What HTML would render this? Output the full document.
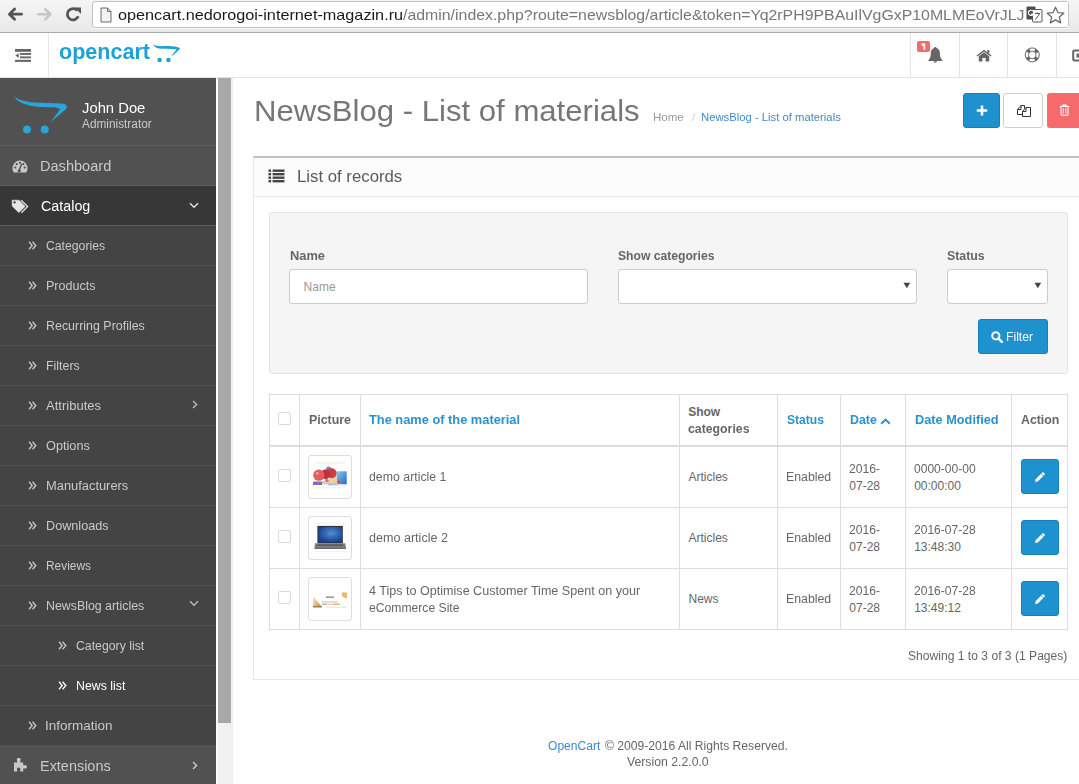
<!DOCTYPE html>
<html><head><meta charset="utf-8"><style>
html,body{margin:0;padding:0;width:1079px;height:784px;overflow:hidden;background:#fff;position:relative;font-family:"Liberation Sans",sans-serif;}
.t{position:absolute;white-space:pre;line-height:20px;height:20px;}
svg{display:block;}
</style></head><body>
<div style="position:absolute;left:0px;top:0px;width:1079px;height:32px;background:linear-gradient(#f5f5f5,#e9e9e9);"></div>
<div style="position:absolute;left:0px;top:32px;width:1079px;height:1px;background:#a9a9a9;"></div>
<svg style="position:absolute;left:0px;top:0px;" width="30" height="30" viewBox="0 0 30 30"><path d="M21.6 14.2H10 M14.6 9.1L9.4 14.2L14.6 19.3" fill="none" stroke="#555" stroke-width="2.8" stroke-linecap="round" stroke-linejoin="round"/></svg>
<svg style="position:absolute;left:30px;top:0px;" width="30" height="30" viewBox="0 0 30 30"><path d="M8.4 14.2H20 M15.3 9.1L20.5 14.2L15.3 19.3" fill="none" stroke="#c6c6c6" stroke-width="2.5" stroke-linecap="round" stroke-linejoin="round"/></svg>
<svg style="position:absolute;left:65px;top:6px;" width="17" height="17" viewBox="0 0 17 17"><path d="M13.2 10.3A5.6 5.6 0 1 1 12.2 4.6" fill="none" stroke="#555" stroke-width="2.8"/><path d="M9.5 1.5L16 1.5L16 8Z" fill="#555"/></svg>
<div style="position:absolute;left:92px;top:1px;width:977px;height:27px;background:#fff;border:1px solid #c3c3c3;border-radius:3px;box-sizing:border-box;box-shadow:0 1px 0 #fafafa;"></div>
<svg style="position:absolute;left:100px;top:6.5px;" width="12" height="16" viewBox="0 0 12 16"><path d="M1 1H7.5L11 4.5V15H1Z" fill="#f2f2f2" stroke="#6a6a6a" stroke-width="1"/><path d="M7.5 1V4.5H11" fill="none" stroke="#6a6a6a" stroke-width="1"/></svg>
<div class="t" style="left:117.80px;top:5.10px;font-size:15px;color:#1a1a1a;font-family:'Liberation Sans';transform:scale(1.0819,1.0);transform-origin:0 15.20px;">opencart.nedorogoi-internet-magazin.ru</div>
<div class="t" style="left:403.30px;top:5.10px;font-size:15px;color:#777;font-family:'Liberation Sans';transform:scale(1.0578,1.0);transform-origin:0 15.20px;">/admin/index.php?route=newsblog/article&amp;token=Yq2rPH9PBAuIlVgGxP10MLMEoVrJLJ</div>
<div style="position:absolute;left:1025px;top:2px;width:43px;height:25px;background:#fff;"></div>
<svg style="position:absolute;left:1026px;top:6px;" width="17" height="17" viewBox="0 0 17 17"><rect x="0.5" y="0.5" width="9" height="13" rx="1" fill="#4d4d4d"/><rect x="6.5" y="3.5" width="9.5" height="12.5" rx="1" fill="#fff" stroke="#555"/><path d="M7 5.2A2.6 2.6 0 1 0 7.2 8.2H5.2" fill="none" stroke="#fff" stroke-width="1.2"/><path d="M9 7.5H14M11.5 6.5V8M9.5 13.5L13.5 8" fill="none" stroke="#555" stroke-width="1"/></svg>
<svg style="position:absolute;left:1046px;top:6px;" width="19" height="18" viewBox="0 0 19 18"><path d="M9.5 1.2L11.9 6.6L17.8 7.2L13.4 11.1L14.7 16.9L9.5 13.9L4.3 16.9L5.6 11.1L1.2 7.2L7.1 6.6Z" fill="none" stroke="#6b6b6b" stroke-width="1.3" stroke-linejoin="round"/></svg>
<div style="position:absolute;left:0px;top:77px;width:1079px;height:1px;background:#e2e2e2;"></div>
<div style="position:absolute;left:48px;top:33px;width:1px;height:44px;background:#e6e6e6;"></div>
<svg style="position:absolute;left:15px;top:49px;" width="17" height="13" viewBox="0 0 17 13"><rect x="0" y="0" width="16" height="2.8" fill="#666"/><rect x="5" y="4" width="11" height="1.9" fill="#666"/><rect x="5" y="7.4" width="11" height="1.9" fill="#666"/><rect x="0" y="10.8" width="16" height="2.1" fill="#666"/><path d="M0.4 6.6L3.6 4.2V9Z" fill="#666"/></svg>
<div style="position:absolute;left:910px;top:33px;width:1px;height:44px;background:#e3e3e3;"></div>
<div style="position:absolute;left:959px;top:33px;width:1px;height:44px;background:#e3e3e3;"></div>
<div style="position:absolute;left:1007px;top:33px;width:1px;height:44px;background:#e3e3e3;"></div>
<div style="position:absolute;left:1056px;top:33px;width:1px;height:44px;background:#e3e3e3;"></div>
<div style="position:absolute;left:917px;top:41px;width:13px;height:11px;background:#f56b6b;border-radius:2px;"></div>
<svg style="position:absolute;left:927px;top:46px;" width="17" height="18" viewBox="0 0 17 18"><path d="M8.3 2C5 2 3.8 4.6 3.8 7.6C3.8 11 2.8 12.8 1 14.9H15.7C13.9 12.8 12.9 11 12.9 7.6C12.9 4.6 11.7 2 8.4 2Z" fill="#666"/><rect x="7.4" y="0.9" width="1.9" height="1.8" fill="#666"/><path d="M6.5 15.2A1.9 1.9 0 0 0 10.2 15.2Z" fill="#666"/></svg>
<svg style="position:absolute;left:976px;top:49px;" width="16" height="13" viewBox="0 0 16 13"><path d="M0.5 6.6L8 0.8L15.5 6.6L14.6 7.6L8 2.6L1.4 7.6Z" fill="#666"/><path d="M2.8 7.2L8 3.3L13.2 7.2V12.5H9.6V9H6.4V12.5H2.8Z" fill="#666"/><rect x="11.3" y="1" width="2" height="3.6" fill="#666"/></svg>
<svg style="position:absolute;left:1024px;top:46px;" width="17" height="18" viewBox="0 0 17 18"><circle cx="8.25" cy="8.9" r="7.0" fill="none" stroke="#666" stroke-width="1"/><circle cx="8.25" cy="8.9" r="3.8" fill="none" stroke="#666" stroke-width="0.9"/><circle cx="8.25" cy="8.9" r="5.4" fill="none" stroke="#666" stroke-width="3.1" stroke-dasharray="3.3 5.03" stroke-dashoffset="-2.51"/></svg>
<svg style="position:absolute;left:1072px;top:49px;" width="10" height="13" viewBox="0 0 10 13"><path d="M7 1.5H2.5Q1.2 1.5 1.2 2.8V10.2Q1.2 11.5 2.5 11.5H7" fill="none" stroke="#666" stroke-width="2"/><rect x="4.5" y="4.5" width="6" height="4" fill="#666"/></svg>
<div class="t" style="left:58.50px;top:41.92px;font-size:21px;font-weight:bold;color:#1ea1da;font-family:'Liberation Sans';transform:scale(1.0260,1.07);transform-origin:0 17.28px;">opencart</div>
<svg style="position:absolute;left:148px;top:38px;" width="40" height="28" viewBox="0 0 40 28"><path d="M5 6C7 8 10 8.4 18.5 8C24 7.8 29 8.5 32 10L31.8 11C29.5 13.5 27 15.8 24.5 17.8L23.8 17.4C25.5 15.3 27.2 13.3 28.6 11.2C22 11 16 11.2 11 10.6C8 10.2 6 8.5 5 6Z" fill="#1ea1da"/><circle cx="11.6" cy="22" r="2.2" fill="#1ea1da"/><circle cx="20.4" cy="22" r="2.2" fill="#1ea1da"/></svg>
<div style="position:absolute;left:0px;top:78px;width:216px;height:706px;background:#515151;"></div>
<div style="position:absolute;left:0px;top:145px;width:216px;height:1px;background:#5c5c5c;"></div>
<div style="position:absolute;left:0px;top:185px;width:216px;height:1px;background:#5c5c5c;"></div>
<div style="position:absolute;left:0px;top:186px;width:216px;height:39px;background:#373737;"></div>
<div style="position:absolute;left:0px;top:225px;width:216px;height:1px;background:#5a5a5a;"></div>
<div style="position:absolute;left:0px;top:226px;width:216px;height:39px;background:#444;"></div>
<div style="position:absolute;left:0px;top:265px;width:216px;height:1px;background:#505050;"></div>
<div style="position:absolute;left:0px;top:266px;width:216px;height:39px;background:#444;"></div>
<div style="position:absolute;left:0px;top:305px;width:216px;height:1px;background:#505050;"></div>
<div style="position:absolute;left:0px;top:306px;width:216px;height:39px;background:#444;"></div>
<div style="position:absolute;left:0px;top:345px;width:216px;height:1px;background:#505050;"></div>
<div style="position:absolute;left:0px;top:346px;width:216px;height:39px;background:#444;"></div>
<div style="position:absolute;left:0px;top:385px;width:216px;height:1px;background:#505050;"></div>
<div style="position:absolute;left:0px;top:386px;width:216px;height:39px;background:#444;"></div>
<div style="position:absolute;left:0px;top:425px;width:216px;height:1px;background:#505050;"></div>
<div style="position:absolute;left:0px;top:426px;width:216px;height:39px;background:#444;"></div>
<div style="position:absolute;left:0px;top:465px;width:216px;height:1px;background:#505050;"></div>
<div style="position:absolute;left:0px;top:466px;width:216px;height:39px;background:#444;"></div>
<div style="position:absolute;left:0px;top:505px;width:216px;height:1px;background:#505050;"></div>
<div style="position:absolute;left:0px;top:506px;width:216px;height:39px;background:#444;"></div>
<div style="position:absolute;left:0px;top:545px;width:216px;height:1px;background:#505050;"></div>
<div style="position:absolute;left:0px;top:546px;width:216px;height:39px;background:#444;"></div>
<div style="position:absolute;left:0px;top:585px;width:216px;height:1px;background:#505050;"></div>
<div style="position:absolute;left:0px;top:586px;width:216px;height:39px;background:#444;"></div>
<div style="position:absolute;left:0px;top:625px;width:216px;height:1px;background:#505050;"></div>
<div style="position:absolute;left:0px;top:626px;width:216px;height:39px;background:#444;"></div>
<div style="position:absolute;left:0px;top:665px;width:216px;height:1px;background:#505050;"></div>
<div style="position:absolute;left:0px;top:666px;width:216px;height:39px;background:#444;"></div>
<div style="position:absolute;left:0px;top:705px;width:216px;height:1px;background:#505050;"></div>
<div style="position:absolute;left:0px;top:706px;width:216px;height:39px;background:#444;"></div>
<div style="position:absolute;left:0px;top:745px;width:216px;height:1px;background:#515151;"></div>
<div style="position:absolute;left:216px;top:78px;width:17px;height:706px;background:#f1f1f1;"></div>
<div style="position:absolute;left:216px;top:78px;width:2px;height:706px;background:#fcfcfc;"></div>
<div style="position:absolute;left:218px;top:78px;width:13px;height:645px;background:#a8a8a8;"></div>
<svg style="position:absolute;left:8px;top:88px;" width="64" height="52" viewBox="8 88 64 52"><path d="M12.97 94.96C15.5 97.8 18.5 99.4 21.3 100C26 101.6 30 102.4 34.5 102.6L47.8 103.1L61 103.6C64 103.9 66 104.6 66.6 105.6L67 106.9C66.5 108 65.8 109.2 65 109.9L50.4 122.2L59.7 109.9C60 109.2 59.5 108.7 59 108.6C57.5 107.8 56 107.3 54.4 107.2L41.2 106.9C35 106.5 31 105.8 27.9 104.9C23 103.8 19 102 16.5 99.4Z" fill="#28a6da"/><circle cx="27" cy="129.6" r="4" fill="#28a6da"/><circle cx="44.7" cy="129.6" r="4" fill="#28a6da"/></svg>
<div class="t" style="left:82.30px;top:97.80px;font-size:15px;color:#fff;font-family:'Liberation Sans';transform:scale(0.9864,1.0);transform-origin:0 15.20px;">John Doe</div>
<div class="t" style="left:82.30px;top:113.84px;font-size:12px;color:#c9c9c9;font-family:'Liberation Sans';transform:scale(0.9860,1.0);transform-origin:0 14.16px;">Administrator</div>
<svg style="position:absolute;left:12px;top:160px;" width="16" height="13" viewBox="0 0 16 13"><path d="M8 0.5A7.5 7.5 0 0 0 0.5 8C0.5 9.7 1 11.2 1.8 12.4H14.2C15 11.2 15.5 9.7 15.5 8A7.5 7.5 0 0 0 8 0.5Z" fill="#c8c8c8"/><circle cx="3.3" cy="7.6" r="1.1" fill="#515151"/><circle cx="4.7" cy="4.2" r="1.1" fill="#515151"/><circle cx="8" cy="2.8" r="1.1" fill="#515151"/><circle cx="12.7" cy="7.6" r="1.1" fill="#515151"/><circle cx="11.3" cy="4.2" r="1.1" fill="#515151"/><path d="M9.6 4L7 10.8" stroke="#515151" stroke-width="1.4"/><circle cx="7.2" cy="10.8" r="1.6" fill="#515151"/></svg>
<div class="t" style="left:40.26px;top:156.15px;font-size:14px;color:#c9c9c9;font-family:'Liberation Sans';transform:scale(1.0404,1.0);transform-origin:0 14.85px;">Dashboard</div>
<svg style="position:absolute;left:8px;top:195px;" width="24" height="22" viewBox="0 0 24 22"><path d="M4.2 5.2H11L17.1 11.4L10.8 17.6L4.2 11Z" fill="#e6e6e6" stroke="#e6e6e6" stroke-width="0.6" stroke-linejoin="round"/><circle cx="6.6" cy="7.4" r="1.1" fill="#373737"/><path d="M13.2 5.2L19.6 11.5L13.4 17.8" fill="none" stroke="#e6e6e6" stroke-width="1.3"/></svg>
<div class="t" style="left:41.30px;top:196.15px;font-size:14px;color:#fff;font-family:'Liberation Sans';transform:scale(1.0217,1.0);transform-origin:0 14.85px;">Catalog</div>
<svg style="position:absolute;left:188.5px;top:202px;" width="10" height="7" viewBox="0 0 10 7"><path d="M1 1.2L5 5.2L9 1.2" fill="none" stroke="#e0e0e0" stroke-width="1.4"/></svg>
<svg style="position:absolute;left:27.5px;top:241.3px;" width="9" height="9" viewBox="0 0 9 9"><path d="M1 0.8L4.2 4.5L1 8.2M4.6 0.8L7.8 4.5L4.6 8.2" fill="none" stroke="#c9c9c9" stroke-width="1.3"/></svg>
<div class="t" style="left:46.30px;top:235.84px;font-size:12px;color:#c9c9c9;font-family:'Liberation Sans';transform:scale(1.0184,1.0);transform-origin:0 14.16px;">Categories</div>
<svg style="position:absolute;left:27.5px;top:281.3px;" width="9" height="9" viewBox="0 0 9 9"><path d="M1 0.8L4.2 4.5L1 8.2M4.6 0.8L7.8 4.5L4.6 8.2" fill="none" stroke="#c9c9c9" stroke-width="1.3"/></svg>
<div class="t" style="left:46.30px;top:275.84px;font-size:12px;color:#c9c9c9;font-family:'Liberation Sans';transform:scale(1.0432,1.0);transform-origin:0 14.16px;">Products</div>
<svg style="position:absolute;left:27.5px;top:321.3px;" width="9" height="9" viewBox="0 0 9 9"><path d="M1 0.8L4.2 4.5L1 8.2M4.6 0.8L7.8 4.5L4.6 8.2" fill="none" stroke="#c9c9c9" stroke-width="1.3"/></svg>
<div class="t" style="left:46.30px;top:315.84px;font-size:12px;color:#c9c9c9;font-family:'Liberation Sans';transform:scale(1.0360,1.0);transform-origin:0 14.16px;">Recurring Profiles</div>
<svg style="position:absolute;left:27.5px;top:361.3px;" width="9" height="9" viewBox="0 0 9 9"><path d="M1 0.8L4.2 4.5L1 8.2M4.6 0.8L7.8 4.5L4.6 8.2" fill="none" stroke="#c9c9c9" stroke-width="1.3"/></svg>
<div class="t" style="left:46.30px;top:355.84px;font-size:12px;color:#c9c9c9;font-family:'Liberation Sans';transform:scale(1.0317,1.0);transform-origin:0 14.16px;">Filters</div>
<svg style="position:absolute;left:27.5px;top:401.3px;" width="9" height="9" viewBox="0 0 9 9"><path d="M1 0.8L4.2 4.5L1 8.2M4.6 0.8L7.8 4.5L4.6 8.2" fill="none" stroke="#c9c9c9" stroke-width="1.3"/></svg>
<div class="t" style="left:46.30px;top:395.84px;font-size:12px;color:#c9c9c9;font-family:'Liberation Sans';transform:scale(1.0850,1.0);transform-origin:0 14.16px;">Attributes</div>
<svg style="position:absolute;left:27.5px;top:441.3px;" width="9" height="9" viewBox="0 0 9 9"><path d="M1 0.8L4.2 4.5L1 8.2M4.6 0.8L7.8 4.5L4.6 8.2" fill="none" stroke="#c9c9c9" stroke-width="1.3"/></svg>
<div class="t" style="left:46.30px;top:435.84px;font-size:12px;color:#c9c9c9;font-family:'Liberation Sans';transform:scale(1.0591,1.0);transform-origin:0 14.16px;">Options</div>
<svg style="position:absolute;left:27.5px;top:481.3px;" width="9" height="9" viewBox="0 0 9 9"><path d="M1 0.8L4.2 4.5L1 8.2M4.6 0.8L7.8 4.5L4.6 8.2" fill="none" stroke="#c9c9c9" stroke-width="1.3"/></svg>
<div class="t" style="left:46.30px;top:475.84px;font-size:12px;color:#c9c9c9;font-family:'Liberation Sans';transform:scale(1.0730,1.0);transform-origin:0 14.16px;">Manufacturers</div>
<svg style="position:absolute;left:27.5px;top:521.3px;" width="9" height="9" viewBox="0 0 9 9"><path d="M1 0.8L4.2 4.5L1 8.2M4.6 0.8L7.8 4.5L4.6 8.2" fill="none" stroke="#c9c9c9" stroke-width="1.3"/></svg>
<div class="t" style="left:46.30px;top:515.84px;font-size:12px;color:#c9c9c9;font-family:'Liberation Sans';transform:scale(1.0545,1.0);transform-origin:0 14.16px;">Downloads</div>
<svg style="position:absolute;left:27.5px;top:561.3px;" width="9" height="9" viewBox="0 0 9 9"><path d="M1 0.8L4.2 4.5L1 8.2M4.6 0.8L7.8 4.5L4.6 8.2" fill="none" stroke="#c9c9c9" stroke-width="1.3"/></svg>
<div class="t" style="left:46.30px;top:555.84px;font-size:12px;color:#c9c9c9;font-family:'Liberation Sans';transform:scale(0.9902,1.0);transform-origin:0 14.16px;">Reviews</div>
<svg style="position:absolute;left:27.5px;top:601.3px;" width="9" height="9" viewBox="0 0 9 9"><path d="M1 0.8L4.2 4.5L1 8.2M4.6 0.8L7.8 4.5L4.6 8.2" fill="none" stroke="#c9c9c9" stroke-width="1.3"/></svg>
<div class="t" style="left:46.30px;top:595.84px;font-size:12px;color:#c9c9c9;font-family:'Liberation Sans';transform:scale(1.0297,1.0);transform-origin:0 14.16px;">NewsBlog articles</div>
<svg style="position:absolute;left:57.5px;top:641.3px;" width="9" height="9" viewBox="0 0 9 9"><path d="M1 0.8L4.2 4.5L1 8.2M4.6 0.8L7.8 4.5L4.6 8.2" fill="none" stroke="#c9c9c9" stroke-width="1.3"/></svg>
<div class="t" style="left:76.30px;top:635.84px;font-size:12px;color:#c9c9c9;font-family:'Liberation Sans';transform:scale(1.0229,1.0);transform-origin:0 14.16px;">Category list</div>
<svg style="position:absolute;left:57.5px;top:681.3px;" width="9" height="9" viewBox="0 0 9 9"><path d="M1 0.8L4.2 4.5L1 8.2M4.6 0.8L7.8 4.5L4.6 8.2" fill="none" stroke="#fff" stroke-width="1.3"/></svg>
<div class="t" style="left:76.30px;top:675.84px;font-size:12px;color:#fff;font-family:'Liberation Sans';transform:scale(1.0273,1.0);transform-origin:0 14.16px;">News list</div>
<svg style="position:absolute;left:27.5px;top:721.3px;" width="9" height="9" viewBox="0 0 9 9"><path d="M1 0.8L4.2 4.5L1 8.2M4.6 0.8L7.8 4.5L4.6 8.2" fill="none" stroke="#c9c9c9" stroke-width="1.3"/></svg>
<div class="t" style="left:45.18px;top:715.84px;font-size:12px;color:#c9c9c9;font-family:'Liberation Sans';transform:scale(1.1241,1.0);transform-origin:0 14.16px;">Information</div>
<svg style="position:absolute;left:192px;top:400px;" width="6" height="9" viewBox="0 0 6 9"><path d="M1 1L4.6 4.5L1 8" fill="none" stroke="#bbb" stroke-width="1.4"/></svg>
<svg style="position:absolute;left:189px;top:600px;" width="10" height="7" viewBox="0 0 10 7"><path d="M1 1.2L5 5.2L9 1.2" fill="none" stroke="#bbb" stroke-width="1.4"/></svg>
<div style="position:absolute;left:0px;top:745px;width:216px;height:39px;background:#515151;"></div>
<svg style="position:absolute;left:12px;top:758px;" width="15" height="14" viewBox="0 0 15 14"><path d="M2 4.5H5.2V2.8A1.9 1.9 0 1 1 8.3 2.8V4.5H11.2V7.2H12.7A1.7 1.7 0 1 1 12.7 10.4H11.2V13.5H8.2V12A1.7 1.7 0 1 0 5.2 12V13.5H2Z" fill="#c8c8c8"/></svg>
<div class="t" style="left:40.37px;top:756.15px;font-size:14px;color:#c9c9c9;font-family:'Liberation Sans';transform:scale(1.0314,1.0);transform-origin:0 14.85px;">Extensions</div>
<svg style="position:absolute;left:192px;top:761px;" width="6" height="9" viewBox="0 0 6 9"><path d="M1 1L4.6 4.5L1 8" fill="none" stroke="#ccc" stroke-width="1.4"/></svg>
<svg style="position:absolute;left:917px;top:41px;" width="13" height="11" viewBox="0 0 13 11"><path d="M4.6 2.6L6.6 2.4H8.2V8.8H6.5V4.4L4.6 4.5Z" fill="#fff"/></svg>
<div class="t" style="left:253.73px;top:100.81px;font-size:30px;color:#767676;font-family:'Liberation Sans';transform:scale(1.0372,1.0);transform-origin:0 20.39px;">NewsBlog - List of materials</div>
<div class="t" style="left:652.60px;top:107.19px;font-size:11px;color:#999;font-family:'Liberation Sans';transform:scale(1.0471,1.0);transform-origin:0 13.81px;">Home</div>
<div class="t" style="left:692.00px;top:107.19px;font-size:11px;color:#ccc;font-family:'Liberation Sans';">/</div>
<div class="t" style="left:700.50px;top:107.19px;font-size:11px;color:#4189cc;font-family:'Liberation Sans';transform:scale(1.0254,1.0);transform-origin:0 13.81px;">NewsBlog - List of materials</div>
<div style="position:absolute;left:963px;top:93px;width:37px;height:35px;background:#1e91cf;border:1px solid #1a80b6;border-radius:3px;box-sizing:border-box;"></div>
<svg style="position:absolute;left:976px;top:105px;" width="12" height="11" viewBox="0 0 12 11"><path d="M6 0.5V10.5M0.8 5.5H11.2" stroke="#fff" stroke-width="2.6"/></svg>
<div style="position:absolute;left:1003px;top:93px;width:40px;height:35px;background:#fff;border:1px solid #cfcfcf;border-radius:3px;box-sizing:border-box;"></div>
<svg style="position:absolute;left:1016px;top:104px;" width="15" height="14" viewBox="0 0 15 14"><path d="M1.5 5.5L5 1.5H8.5V4.5M1.5 5.5V10.5H6.5M5 1.5V5.5H1.5" fill="none" stroke="#333" stroke-width="1"/><path d="M6.5 7.5L10 3.5H14.5V12.5H6.5Z" fill="#fff" stroke="#333" stroke-width="1"/><path d="M10 3.5V7.5H6.5" fill="none" stroke="#333" stroke-width="1"/></svg>
<div style="position:absolute;left:1047px;top:93px;width:40px;height:35px;background:#f56b6b;border-radius:3px;"></div>
<svg style="position:absolute;left:1059px;top:104px;" width="12" height="13" viewBox="0 0 13 14"><path d="M0.8 2.6H11.2M4.2 2.4V1.2H7.8V2.4" fill="none" stroke="#fff" stroke-width="1.2"/><path d="M2.2 3.4V11.2Q2.2 12.1 3.1 12.1H8.9Q9.8 12.1 9.8 11.2V3.4" fill="none" stroke="#fff" stroke-width="1.2"/><path d="M4.6 4.6V10.4M7.4 4.6V10.4" stroke="#fff" stroke-width="1"/></svg>
<div style="position:absolute;left:253px;top:156px;width:840px;height:524px;background:#fff;border:1px solid #e8e8e8;border-top:2px solid #bfbfbf;box-sizing:border-box;"></div>
<div style="position:absolute;left:254px;top:158px;width:840px;height:39px;background:#fcfcfc;border-bottom:1px solid #e8e8e8;box-sizing:border-box;"></div>
<svg style="position:absolute;left:268px;top:169px;" width="17" height="14" viewBox="0 0 17 14"><rect x="0.5" y="0.5" width="2.6" height="2.4" fill="#444"/><rect x="4.6" y="0.5" width="11.9" height="2.4" fill="#444"/><rect x="0.5" y="4" width="2.6" height="2.4" fill="#444"/><rect x="4.6" y="4" width="11.9" height="2.4" fill="#444"/><rect x="0.5" y="7.5" width="2.6" height="2.4" fill="#444"/><rect x="4.6" y="7.5" width="11.9" height="2.4" fill="#444"/><rect x="0.5" y="11" width="2.6" height="2.4" fill="#444"/><rect x="4.6" y="11" width="11.9" height="2.4" fill="#444"/></svg>
<div class="t" style="left:297.45px;top:166.96px;font-size:16px;color:#595959;font-family:'Liberation Sans';transform:scale(1.0474,1.0);transform-origin:0 15.54px;">List of records</div>
<div style="position:absolute;left:269px;top:212px;width:799px;height:162px;background:#f5f5f5;border:1px solid #e3e3e3;border-radius:3px;box-sizing:border-box;"></div>
<div class="t" style="left:289.70px;top:245.84px;font-size:12px;font-weight:bold;color:#666;font-family:'Liberation Sans';transform:scale(1.0694,1.0);transform-origin:0 14.16px;">Name</div>
<div class="t" style="left:618.00px;top:245.84px;font-size:12px;font-weight:bold;color:#666;font-family:'Liberation Sans';transform:scale(1.0116,1.0);transform-origin:0 14.16px;">Show categories</div>
<div class="t" style="left:946.80px;top:245.84px;font-size:12px;font-weight:bold;color:#666;font-family:'Liberation Sans';transform:scale(1.0270,1.0);transform-origin:0 14.16px;">Status</div>
<div style="position:absolute;left:289px;top:269px;width:299px;height:35px;background:#fff;border:1px solid #ccc;border-radius:3px;box-sizing:border-box;"></div>
<div class="t" style="left:303.60px;top:276.64px;font-size:12px;color:#999;font-family:'Liberation Sans';">Name</div>
<div style="position:absolute;left:618px;top:269px;width:299px;height:35px;background:#fff;border:1px solid #ccc;border-radius:3px;box-sizing:border-box;"></div>
<svg style="position:absolute;left:903px;top:282px;" width="8" height="7" viewBox="0 0 8 7"><path d="M0.5 0.8H7.2L3.85 6.2Z" fill="#444"/></svg>
<div style="position:absolute;left:947px;top:269px;width:101px;height:35px;background:#fff;border:1px solid #ccc;border-radius:3px;box-sizing:border-box;"></div>
<svg style="position:absolute;left:1034px;top:282px;" width="8" height="7" viewBox="0 0 8 7"><path d="M0.5 0.8H7.2L3.85 6.2Z" fill="#444"/></svg>
<div style="position:absolute;left:978px;top:319px;width:70px;height:35px;background:#1e91cf;border:1px solid #1a80b6;border-radius:3px;box-sizing:border-box;"></div>
<svg style="position:absolute;left:991px;top:331px;" width="12" height="12" viewBox="0 0 12 12"><circle cx="4.8" cy="4.8" r="3.6" fill="none" stroke="#fff" stroke-width="2"/><path d="M7.4 7.4L10.8 10.8" stroke="#fff" stroke-width="2.4" stroke-linecap="round"/></svg>
<div class="t" style="left:1006.30px;top:326.84px;font-size:12px;color:#fff;font-family:'Liberation Sans';transform:scale(1.0161,1.0);transform-origin:0 14.16px;">Filter</div>
<div style="position:absolute;left:269px;top:394px;width:799px;height:236px;background:#fff;"></div>
<div style="position:absolute;left:269px;top:394px;width:1px;height:236px;background:#ddd;"></div>
<div style="position:absolute;left:299px;top:394px;width:1px;height:236px;background:#ddd;"></div>
<div style="position:absolute;left:360px;top:394px;width:1px;height:236px;background:#ddd;"></div>
<div style="position:absolute;left:679px;top:394px;width:1px;height:236px;background:#ddd;"></div>
<div style="position:absolute;left:777px;top:394px;width:1px;height:236px;background:#ddd;"></div>
<div style="position:absolute;left:840px;top:394px;width:1px;height:236px;background:#ddd;"></div>
<div style="position:absolute;left:905px;top:394px;width:1px;height:236px;background:#ddd;"></div>
<div style="position:absolute;left:1011px;top:394px;width:1px;height:236px;background:#ddd;"></div>
<div style="position:absolute;left:1067px;top:394px;width:1px;height:236px;background:#ddd;"></div>
<div style="position:absolute;left:269px;top:394px;width:799px;height:1px;background:#ddd;"></div>
<div style="position:absolute;left:269px;top:445px;width:799px;height:2px;background:#ddd;"></div>
<div style="position:absolute;left:269px;top:507px;width:799px;height:1px;background:#ddd;"></div>
<div style="position:absolute;left:269px;top:568px;width:799px;height:1px;background:#ddd;"></div>
<div style="position:absolute;left:269px;top:629px;width:799px;height:1px;background:#ddd;"></div>
<div style="position:absolute;left:278px;top:412px;width:13px;height:13px;background:#fff;border:1px solid #d9d9d9;border-radius:2px;box-sizing:border-box;"></div>
<div class="t" style="left:308.70px;top:409.84px;font-size:12px;font-weight:bold;color:#666;font-family:'Liberation Sans';transform:scale(1.0315,1.0);transform-origin:0 14.16px;">Picture</div>
<div class="t" style="left:368.90px;top:409.84px;font-size:12px;font-weight:bold;color:#2b91d0;font-family:'Liberation Sans';transform:scale(1.0685,1.0);transform-origin:0 14.16px;">The name of the material</div>
<div class="t" style="left:688.20px;top:401.94px;font-size:12px;font-weight:bold;color:#666;font-family:'Liberation Sans';">Show</div>
<div class="t" style="left:688.20px;top:418.64px;font-size:12px;font-weight:bold;color:#666;font-family:'Liberation Sans';transform:scale(1.0239,1.0);transform-origin:0 14.16px;">categories</div>
<div class="t" style="left:786.80px;top:409.84px;font-size:12px;font-weight:bold;color:#2b91d0;font-family:'Liberation Sans';transform:scale(1.0081,1.0);transform-origin:0 14.16px;">Status</div>
<div class="t" style="left:849.70px;top:409.84px;font-size:12px;font-weight:bold;color:#2b91d0;font-family:'Liberation Sans';transform:scale(1.0290,1.0);transform-origin:0 14.16px;">Date</div>
<svg style="position:absolute;left:880px;top:418px;" width="11" height="7" viewBox="0 0 11 7"><path d="M1.2 5.8L5.5 1.6L9.8 5.8" fill="none" stroke="#2b91d0" stroke-width="2"/></svg>
<div class="t" style="left:914.90px;top:409.84px;font-size:12px;font-weight:bold;color:#2b91d0;font-family:'Liberation Sans';transform:scale(1.0633,1.0);transform-origin:0 14.16px;">Date Modified</div>
<div class="t" style="left:1020.80px;top:409.84px;font-size:12px;font-weight:bold;color:#666;font-family:'Liberation Sans';transform:scale(1.0270,1.0);transform-origin:0 14.16px;">Action</div>
<div style="position:absolute;left:278px;top:469px;width:13px;height:13px;background:#fff;border:1px solid #d9d9d9;border-radius:2px;box-sizing:border-box;"></div>
<div style="position:absolute;left:308px;top:455px;width:44px;height:44px;background:#fff;border:1px solid #ddd;border-radius:3px;box-sizing:border-box;"></div>
<svg style="position:absolute;left:313px;top:460px;" width="34" height="34" viewBox="0 0 34 34"><defs><linearGradient id="bl" x1="0" y1="0" x2="1" y2="1"><stop offset="0" stop-color="#8cc8f0"/><stop offset="1" stop-color="#1f6fc0"/></linearGradient><filter id="sf"><feGaussianBlur stdDeviation="0.45"/></filter></defs><g filter="url(#sf)"><rect x="2" y="2" width="30" height="2" fill="#fbf6e8"/><rect x="1" y="27" width="32" height="1.5" fill="#f2f2f2"/><rect x="23.5" y="11.3" width="10.2" height="12.7" fill="url(#bl)"/><path d="M14 23L21 9.5L25 23Z" fill="#e9cf98"/><circle cx="15.6" cy="9" r="2.6" fill="#9d72b5"/><circle cx="18.6" cy="13.2" r="5" fill="#cc3c44"/><circle cx="12.4" cy="14.4" r="4.8" fill="#b8323a"/><circle cx="5.8" cy="15.2" r="5.6" fill="#e45b61"/><circle cx="4.2" cy="13.2" r="1.2" fill="#f3b0b2"/><rect x="0" y="21.5" width="9" height="3.5" fill="#7c70c4"/><rect x="9" y="21" width="6" height="3.5" fill="#d9d2a0"/><circle cx="14" cy="20.5" r="1.8" fill="#e6639e"/><rect x="15" y="23" width="10" height="2.5" fill="#a8c8f0"/><circle cx="25.5" cy="21.8" r="1.5" fill="#e04848"/><rect x="25" y="24" width="9" height="1.5" fill="#d0e0f0"/></g></svg>
<div class="t" style="left:369.30px;top:466.84px;font-size:12px;color:#666;font-family:'Liberation Sans';transform:scale(1.0278,1.0);transform-origin:0 14.16px;">demo article 1</div>
<div class="t" style="left:688.50px;top:466.84px;font-size:12px;color:#666;font-family:'Liberation Sans';">Articles</div>
<div class="t" style="left:786.30px;top:466.84px;font-size:12px;color:#666;font-family:'Liberation Sans';transform:scale(1.0262,1.0);transform-origin:0 14.16px;">Enabled</div>
<div class="t" style="left:849.30px;top:459.14px;font-size:12px;color:#666;font-family:'Liberation Sans';transform:scale(1.0099,1.0);transform-origin:0 14.16px;">2016-</div>
<div class="t" style="left:849.30px;top:475.84px;font-size:12px;color:#666;font-family:'Liberation Sans';">07-28</div>
<div class="t" style="left:914.20px;top:459.14px;font-size:12px;color:#666;font-family:'Liberation Sans';transform:scale(1.0047,1.0);transform-origin:0 14.16px;">0000-00-00</div>
<div class="t" style="left:914.20px;top:475.84px;font-size:12px;color:#666;font-family:'Liberation Sans';">00:00:00</div>
<div style="position:absolute;left:1021px;top:459px;width:38px;height:35px;background:#1e91cf;border:1px solid #1a80b6;border-radius:3px;box-sizing:border-box;"></div>
<svg style="position:absolute;left:1034px;top:471px;" width="12" height="12" viewBox="0 0 12 12"><path d="M1 11L1.6 8.2L8.3 1.5Q9 0.8 9.7 1.5L10.5 2.3Q11.2 3 10.5 3.7L3.8 10.4Z" fill="#fff"/><path d="M7.2 2.6L9.4 4.8" stroke="#1e91cf" stroke-width="0.9"/></svg>
<div style="position:absolute;left:278px;top:530px;width:13px;height:13px;background:#fff;border:1px solid #d9d9d9;border-radius:2px;box-sizing:border-box;"></div>
<div style="position:absolute;left:308px;top:516px;width:44px;height:44px;background:#fff;border:1px solid #ddd;border-radius:3px;box-sizing:border-box;"></div>
<svg style="position:absolute;left:313px;top:521px;" width="34" height="34" viewBox="0 0 34 34"><defs><radialGradient id="sc" cx="0.55" cy="0.4" r="0.6"><stop offset="0" stop-color="#4f8fd6"/><stop offset="1" stop-color="#1a3f8e"/></radialGradient><filter id="sf2"><feGaussianBlur stdDeviation="0.35"/></filter></defs><g filter="url(#sf2)"><rect x="1" y="1.5" width="32" height="2" fill="#f6f6ee"/><rect x="4.4" y="4.9" width="25.4" height="17.4" fill="#2b2d3a"/><rect x="5.4" y="5.9" width="23.6" height="15.6" fill="url(#sc)"/><path d="M2 22.2H32.2L33 26.8Q33 27.6 31.5 27.6H2.8Q1.4 27.6 1.4 26.8Z" fill="#7b7b7d"/><rect x="4" y="23.3" width="26" height="1.8" fill="#5e5e60"/><rect x="1.4" y="27" width="31.6" height="0.8" fill="#555"/><rect x="1" y="30" width="32" height="1.2" fill="#f3f3f3"/></g></svg>
<div class="t" style="left:369.30px;top:527.84px;font-size:12px;color:#666;font-family:'Liberation Sans';transform:scale(1.0476,1.0);transform-origin:0 14.16px;">demo article 2</div>
<div class="t" style="left:688.50px;top:527.84px;font-size:12px;color:#666;font-family:'Liberation Sans';">Articles</div>
<div class="t" style="left:786.30px;top:527.84px;font-size:12px;color:#666;font-family:'Liberation Sans';transform:scale(1.0262,1.0);transform-origin:0 14.16px;">Enabled</div>
<div class="t" style="left:849.30px;top:520.14px;font-size:12px;color:#666;font-family:'Liberation Sans';transform:scale(1.0099,1.0);transform-origin:0 14.16px;">2016-</div>
<div class="t" style="left:849.30px;top:536.84px;font-size:12px;color:#666;font-family:'Liberation Sans';">07-28</div>
<div class="t" style="left:914.20px;top:520.14px;font-size:12px;color:#666;font-family:'Liberation Sans';transform:scale(1.0047,1.0);transform-origin:0 14.16px;">2016-07-28</div>
<div class="t" style="left:914.20px;top:536.84px;font-size:12px;color:#666;font-family:'Liberation Sans';">13:48:30</div>
<div style="position:absolute;left:1021px;top:520px;width:38px;height:35px;background:#1e91cf;border:1px solid #1a80b6;border-radius:3px;box-sizing:border-box;"></div>
<svg style="position:absolute;left:1034px;top:532px;" width="12" height="12" viewBox="0 0 12 12"><path d="M1 11L1.6 8.2L8.3 1.5Q9 0.8 9.7 1.5L10.5 2.3Q11.2 3 10.5 3.7L3.8 10.4Z" fill="#fff"/><path d="M7.2 2.6L9.4 4.8" stroke="#1e91cf" stroke-width="0.9"/></svg>
<div style="position:absolute;left:278px;top:591px;width:13px;height:13px;background:#fff;border:1px solid #d9d9d9;border-radius:2px;box-sizing:border-box;"></div>
<div style="position:absolute;left:308px;top:577px;width:44px;height:44px;background:#fff;border:1px solid #ddd;border-radius:3px;box-sizing:border-box;"></div>
<svg style="position:absolute;left:313px;top:582px;" width="34" height="34" viewBox="0 0 34 34"><defs><linearGradient id="og" x1="0" y1="0" x2="1" y2="1"><stop offset="0" stop-color="#fff3dc"/><stop offset="1" stop-color="#c78a35"/></linearGradient><filter id="sf3"><feGaussianBlur stdDeviation="0.4"/></filter></defs><g filter="url(#sf3)"><path d="M0 14L9 25H0Z" fill="url(#og)"/><rect x="0" y="24" width="9" height="1.5" fill="#a87a3c"/><path d="M29 10.5H34V16.5Q31 16 29 14Z" fill="#e9b675"/><rect x="13" y="14.5" width="8" height="1.4" fill="#8a8a8a"/><rect x="9" y="19.5" width="16" height="0.9" fill="#b8b8b8"/><rect x="9" y="21.6" width="5" height="1.2" fill="#a8a8a8"/><rect x="14.5" y="21.6" width="5" height="1.3" fill="#f3cf90"/><rect x="20" y="21.6" width="7" height="1.3" fill="#e2a962"/><rect x="13" y="24.8" width="21" height="0.8" fill="#dcdcdc"/></g></svg>
<div class="t" style="left:369.20px;top:580.84px;font-size:12px;color:#666;font-family:'Liberation Sans';transform:scale(1.0478,1.0);transform-origin:0 14.16px;">4 Tips to Optimise Customer Time Spent on your</div>
<div class="t" style="left:369.20px;top:598.34px;font-size:12px;color:#666;font-family:'Liberation Sans';transform:scale(1.0124,1.0);transform-origin:0 14.16px;">eCommerce Site</div>
<div class="t" style="left:688.50px;top:588.84px;font-size:12px;color:#666;font-family:'Liberation Sans';">News</div>
<div class="t" style="left:786.30px;top:588.84px;font-size:12px;color:#666;font-family:'Liberation Sans';transform:scale(1.0262,1.0);transform-origin:0 14.16px;">Enabled</div>
<div class="t" style="left:849.30px;top:581.14px;font-size:12px;color:#666;font-family:'Liberation Sans';transform:scale(1.0099,1.0);transform-origin:0 14.16px;">2016-</div>
<div class="t" style="left:849.30px;top:597.84px;font-size:12px;color:#666;font-family:'Liberation Sans';">07-28</div>
<div class="t" style="left:914.20px;top:581.14px;font-size:12px;color:#666;font-family:'Liberation Sans';transform:scale(1.0047,1.0);transform-origin:0 14.16px;">2016-07-28</div>
<div class="t" style="left:914.20px;top:597.84px;font-size:12px;color:#666;font-family:'Liberation Sans';">13:49:12</div>
<div style="position:absolute;left:1021px;top:581px;width:38px;height:35px;background:#1e91cf;border:1px solid #1a80b6;border-radius:3px;box-sizing:border-box;"></div>
<svg style="position:absolute;left:1034px;top:593px;" width="12" height="12" viewBox="0 0 12 12"><path d="M1 11L1.6 8.2L8.3 1.5Q9 0.8 9.7 1.5L10.5 2.3Q11.2 3 10.5 3.7L3.8 10.4Z" fill="#fff"/><path d="M7.2 2.6L9.4 4.8" stroke="#1e91cf" stroke-width="0.9"/></svg>
<div class="t" style="left:908.40px;top:645.84px;font-size:12px;color:#666;font-family:'Liberation Sans';transform:scale(1.0082,1.0);transform-origin:0 14.16px;">Showing 1 to 3 of 3 (1 Pages)</div>
<div class="t" style="left:548.40px;top:735.64px;font-size:12px;color:#4189cc;font-family:'Liberation Sans';transform:scale(1.0059,1.0);transform-origin:0 14.16px;">OpenCart</div>
<div class="t" style="left:605.00px;top:735.64px;font-size:12px;color:#666;font-family:'Liberation Sans';transform:scale(1.0106,1.0);transform-origin:0 14.16px;">© 2009-2016 All Rights Reserved.</div>
<div class="t" style="left:627.20px;top:752.44px;font-size:12px;color:#666;font-family:'Liberation Sans';transform:scale(1.0201,1.0);transform-origin:0 14.16px;">Version 2.2.0.0</div>
</body></html>
